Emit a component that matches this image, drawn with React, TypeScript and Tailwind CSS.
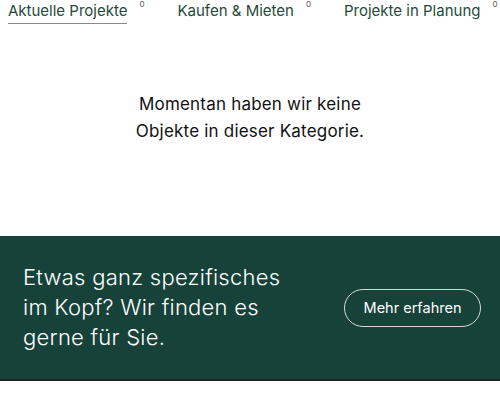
export default function App() {
  const tabs = [
    { label: "Aktuelle Projekte", active: true },
    { label: "Kaufen & Mieten", active: false },
    { label: "Projekte in Planung", active: false },
  ];
  return (
    <div className="w-[500px] h-[395px] bg-white overflow-hidden" style={{ fontFamily: "Inter, 'Noto Sans', sans-serif" }}>
      <div className="flex pl-[8px] gap-[33px] pt-[1px]">
        {tabs.map((t) => (
          <div key={t.label} className="flex items-start">
            <div className={`text-[15px] leading-[20px] text-[#1f4a3a] pb-[2px] ${t.active ? "border-b border-[#8a8a8a]" : "border-b border-transparent"}`}>
              {t.label}
            </div>
            <span className="text-[8px] leading-[8px] text-[#555] ml-[12px] -mt-[1px]">0</span>
          </div>
        ))}
      </div>
      <div className="h-[212px] flex flex-col items-center pt-[67px] text-[17px] leading-[27px] text-[#111] tracking-[0.2px]">
        <p>Momentan haben wir keine</p>
        <p>Objekte in dieser Kategorie.</p>
      </div>
      <div className="h-[145px] bg-[#16423a] border-b-[2px] border-[#222] flex items-center justify-between pl-[23px] pr-[19px]">
        <p className="text-[22px] leading-[30px] font-light text-white w-[280px] -mt-[1px] tracking-[0.25px]">
          Etwas ganz spezifisches im Kopf? Wir finden es gerne für Sie.
        </p>
        <button className="h-[38px] px-[18px] w-[137px] rounded-full border border-[#d8d8d8] text-white text-[14.5px]">
          Mehr erfahren
        </button>
      </div>
    </div>
  );
}
